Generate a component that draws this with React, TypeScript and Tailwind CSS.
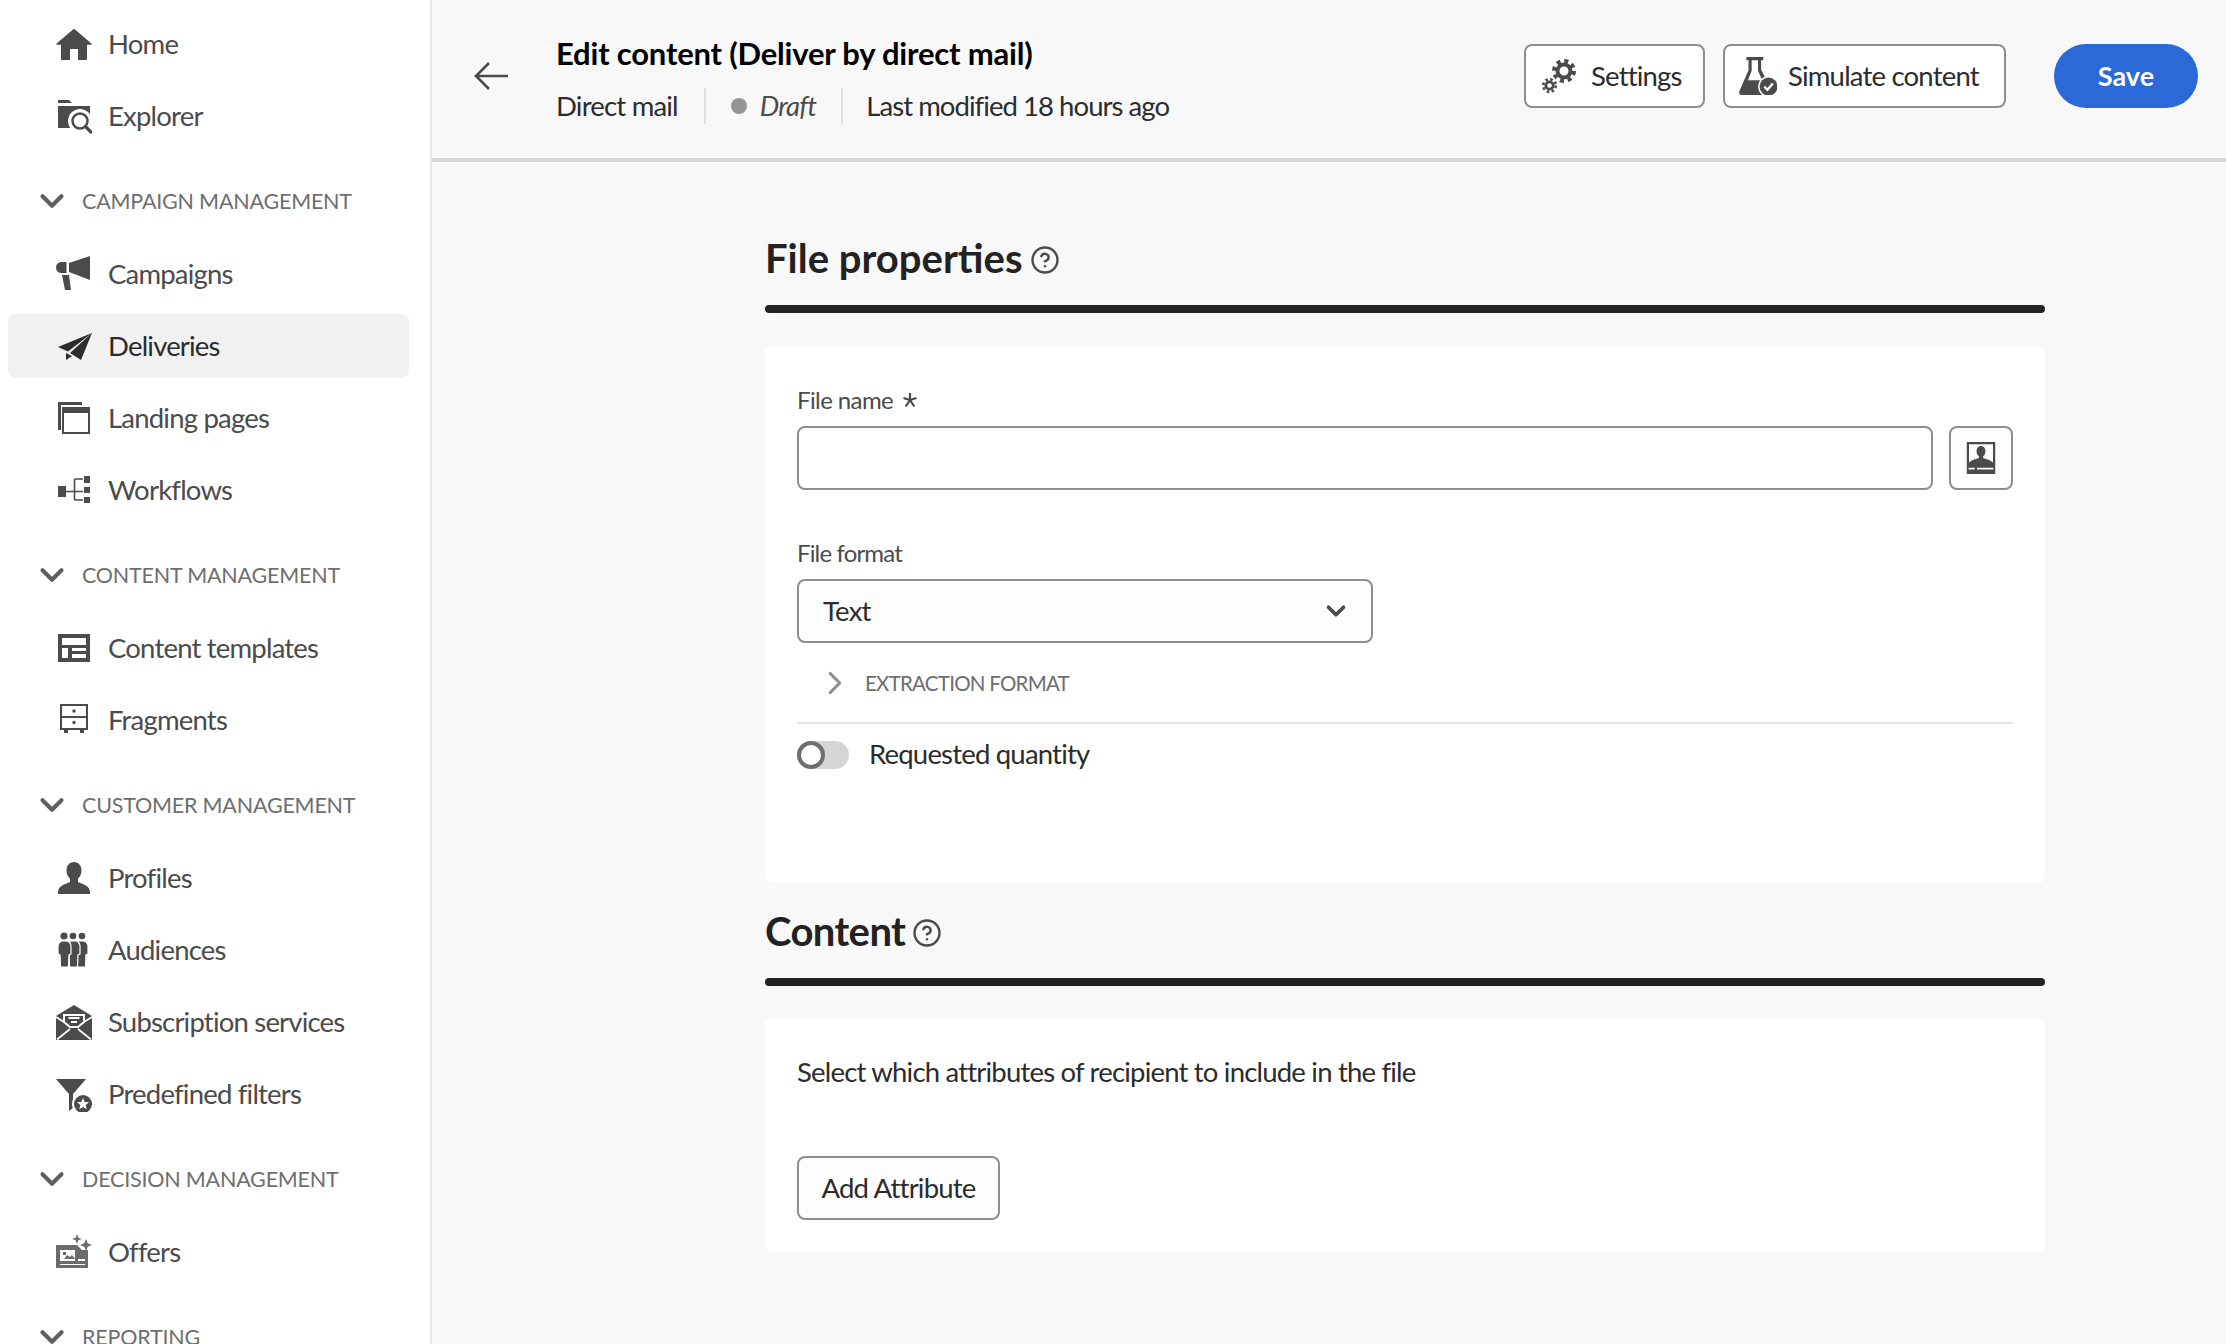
import { ChevronDown, ChevronRight, CircleHelp } from 'lucide-react'
import type { ReactNode } from 'react'

type IconProps = { className?: string }

const Svg = ({ children, className = 'w-9 h-9 shrink-0' }: { children: ReactNode; className?: string }) => (
  <svg viewBox="0 0 36 36" className={className} fill="currentColor">
    {children}
  </svg>
)

const HomeIcon = () => (
  <Svg>
    <path d="M18.7 3.3a1 1 0 0 0-1.4 0L.6 17.4a.8.8 0 0 0 .5 1.4H5V33a1 1 0 0 0 1 1h8V23h8v11h8a1 1 0 0 0 1-1V18.800h3.900a.8.8 0 0 0 .5-1.400z" />
  </Svg>
)

const ExplorerIcon = () => (
  <Svg>
    <path d="M2 2h11l3 3H2zM2 8h32v22H2z" />
    <circle cx="24" cy="23" r="12" fill="#fff" />
    <circle cx="24" cy="23" r="7.500" fill="none" stroke="currentColor" strokeWidth="2.500" />
    <path d="M29.500 28.500 35 34" stroke="currentColor" strokeWidth="3.200" strokeLinecap="round" />
  </Svg>
)

const CampaignsIcon = () => (
  <Svg>
    <path d="M13 7 34 0v24l-21-8zM10.500 6v11H5.500a5.500 5.500 0 0 1 0-11zM6 19h7l2 15H9z" />
  </Svg>
)

const DeliveriesIcon = () => (
  <Svg>
    <path d="M36 5 2 19l10 4.500zM36 5 14 25l11 7zM10 25v7l6-4z" />
  </Svg>
)

const LandingIcon = () => (
  <Svg>
    <path d="M2 2h24v3H5v25H2z" />
    <path fillRule="evenodd" d="M6 7h28v27H6zm2 6v19h24V13z" />
  </Svg>
)

const WorkflowsIcon = () => (
  <Svg>
    <path d="M2 14h8v11H2zM28 4h6v7h-6zM28 15h6v6h-6zM28 25h6v6h-6z" />
    <path d="M10 19.500h17M18.500 7v21M18.500 7H27M18.500 28H27" fill="none" stroke="currentColor" strokeWidth="1.600" />
  </Svg>
)

const TemplatesIcon = () => (
  <Svg>
    <path fillRule="evenodd" d="M2 4h32v28H2zm4 4v7h24V8zm0 10v10h6V18zm10 0v3h14v-3zm0 6v4h14v-4z" />
  </Svg>
)

const FragmentsIcon = () => (
  <Svg>
    <path d="M5 3h26v24H5zM5 15h26" fill="none" stroke="currentColor" strokeWidth="2" />
    <circle cx="18" cy="9" r="1.700" />
    <circle cx="18" cy="20.500" r="1.700" />
    <path d="M8 27h4v4H8zM24 27h4v4h-4z" />
  </Svg>
)

const ProfilesIcon = () => (
  <Svg>
    <path d="M18 2c-4.500 0-7.500 3.500-7.500 8.500 0 3.500 1.500 6.500 3.500 8v3.500c-4 2-12 3-12 10.500V34h32v-1.500C34 25 26 24 22 22v-3.500c2-1.500 3.500-4.500 3.500-8C25.500 5.500 22.500 2 18 2z" />
  </Svg>
)

const AudienceBody = ({ x }: { x: number }) => (
  <path
    transform={`translate(${x} 0)`}
    stroke="#fff"
    strokeWidth="1.200"
    d="M2 14a5 5 0 0 1 5-5h3a5 5 0 0 1 5 5v8l-2 1-.5 12h-8l-.5-12-2-1z"
  />
)

const AudiencesIcon = () => (
  <Svg>
    <circle cx="8" cy="4" r="3.600" />
    <circle cx="17" cy="4" r="3.300" />
    <circle cx="26" cy="4" r="3.300" />
    <AudienceBody x={17} />
    <AudienceBody x={9} />
    <AudienceBody x={0} />
  </Svg>
)

const SubscriptionIcon = () => (
  <Svg>
    <path d="M0 12 18 1l18 11v24H0z" />
    <path d="M8 11h20v7l-6 5h-8l-6-5z" stroke="#fff" strokeWidth="2" />
    <path d="M12.500 14h11M15 18h6" stroke="#fff" strokeWidth="1.800" />
    <path d="M0 13l8 5M36 13l-8 5M1 35.500 14 25M35 35.500 22 25" fill="none" stroke="#fff" strokeWidth="1.800" />
  </Svg>
)

const FiltersIcon = () => (
  <Svg>
    <path d="M0 3h30L17 18v14l-4 3V18z" />
    <circle cx="27" cy="28" r="11" fill="#fff" />
    <circle cx="27" cy="28" r="9" />
    <path fill="#fff" d="m27 22 1.700 4 4.300.3-3.300 2.800 1 4.200-3.700-2.300-3.700 2.300 1-4.200-3.300-2.800 4.300-.3z" />
  </Svg>
)

const OffersIcon = () => (
  <Svg className="w-9 h-9 shrink-0 text-[#6b6b6b]">
    <path fillRule="evenodd" d="M0 11h21l5 5 6 0v18H0zm4 5v11h15V16zm18 9v2h7v-2zM4 30v1h25v-1z" />
    <path d="M8 25l3-4 3 2 2-2 3 4zM7 18h3v3H7z" />
    <path d="m21 0 1.300 3.700L26 5l-3.700 1.300L21 10l-1.300-3.700L16 5l3.700-1.300zM30 5l1.700 4.300L36 11l-4.300 1.700L30 17l-1.700-4.300L24 11l4.300-1.700z" />
  </Svg>
)

const SettingsIcon = () => (
  <Svg className="w-[36px] h-[36px] shrink-0">
    <circle cx="23" cy="13" r="6.500" fill="none" stroke="currentColor" strokeWidth="4" />
    <circle cx="23" cy="13" r="10" fill="none" stroke="currentColor" strokeWidth="4" strokeDasharray="4 3.850" />
    <circle cx="8.500" cy="27.500" r="3.700" fill="none" stroke="currentColor" strokeWidth="2.800" />
    <circle cx="8.500" cy="27.500" r="6.300" fill="none" stroke="currentColor" strokeWidth="2.600" strokeDasharray="2.500 2.450" />
  </Svg>
)

const SimulateIcon = () => (
  <Svg className="w-[38px] h-[38px] shrink-0">
    <path d="M7 0h16v3h-2v9l4 8-3 2-4-9V3h-6v10L5 31h16l3 5H2.500C.5 36-.5 34 .5 32L9 12.500V3H7z" />
    <path d="M8 22h13l3 14H2z" />
    <circle cx="28" cy="28" r="10" fill="#fff" />
    <circle cx="28" cy="28" r="8.500" />
    <path d="m24 28 3 3 5-6" fill="none" stroke="#fff" strokeWidth="2.200" />
  </Svg>
)

const PersonCardIcon = () => (
  <Svg className="w-[32px] h-[32px] shrink-0">
    <path fillRule="evenodd" d="M2 0h32v36H2zm2.500 2.500v20.500h27V2.500z" />
    <path d="M18 4.500c-3 0-5 2.500-5 6 0 2.500 1 4.500 2.500 5.500v2c-3 1.500-8 1.500-11 5.500h27c-3-4-8-4-11-5.500v-2c1.500-1 2.500-3 2.500-5.500 0-3.500-2-6-5-6z" />
    <path fill="#fff" d="M4 29h7v2H4zM13.500 29H32v2H13.500z" />
  </Svg>
)

const BackArrow = () => (
  <svg viewBox="0 0 34 28" className="w-[34px] h-[28px] shrink-0 text-[#4b4b4b]" fill="none" stroke="currentColor" strokeWidth="2.600">
    <path d="M34 14H2M15 1 2 14l13 13" />
  </svg>
)

const StarMark = () => (
  <svg viewBox="0 0 14 14" className="w-[14px] h-[14px] ml-[10px]" stroke="currentColor" strokeWidth="2.200" fill="none">
    <path d="M7 0v7M.5 5 7 7M13.500 5 7 7M2.700 13.500 7 7M11.300 13.500 7 7" />
  </svg>
)

interface NavItem {
  label: string
  icon: (props: IconProps) => ReactNode
  active?: boolean
}

interface NavGroup {
  title?: string
  items: NavItem[]
}

const NAV_GROUPS: NavGroup[] = [
  {
    items: [
      { label: 'Home', icon: HomeIcon },
      { label: 'Explorer', icon: ExplorerIcon },
    ],
  },
  {
    title: 'Campaign Management',
    items: [
      { label: 'Campaigns', icon: CampaignsIcon },
      { label: 'Deliveries', icon: DeliveriesIcon, active: true },
      { label: 'Landing pages', icon: LandingIcon },
      { label: 'Workflows', icon: WorkflowsIcon },
    ],
  },
  {
    title: 'Content Management',
    items: [
      { label: 'Content templates', icon: TemplatesIcon },
      { label: 'Fragments', icon: FragmentsIcon },
    ],
  },
  {
    title: 'Customer Management',
    items: [
      { label: 'Profiles', icon: ProfilesIcon },
      { label: 'Audiences', icon: AudiencesIcon },
      { label: 'Subscription services', icon: SubscriptionIcon },
      { label: 'Predefined filters', icon: FiltersIcon },
    ],
  },
  {
    title: 'Decision Management',
    items: [{ label: 'Offers', icon: OffersIcon }],
  },
  { title: 'Reporting', items: [] },
]

function Sidebar() {
  return (
    <aside className="w-[432px] shrink-0 h-full overflow-hidden bg-white border-r-2 border-[#e8e8e8] pl-2 pr-[21px] pt-3">
      {NAV_GROUPS.map((group, i) => (
        <div key={i}>
          {group.title && (
            <div className="flex items-center h-10 mt-[33px] mb-[21px] pl-[25px] text-[#6e6e6e]">
              <ChevronDown className="w-[38px] h-[38px] shrink-0 text-[#5f5f5f]" strokeWidth={2.600} />
              <span className="ml-[11px] text-[21.5px] uppercase tracking-[-0.2px]">{group.title}</span>
            </div>
          )}
          <div className="flex flex-col gap-2">
            {group.items.map((item) => {
              const Icon = item.icon
              return (
                <div
                  key={item.label}
                  className={`flex items-center h-16 pl-12 gap-4 rounded-lg text-[27.5px] ${
                    item.active ? 'bg-[#f1f1f1] text-[#2c2c2c]' : 'text-[#4b4b4b]'
                  }`}
                >
                  <Icon />
                  <span className="tracking-[-0.8px]">{item.label}</span>
                </div>
              )
            })}
          </div>
        </div>
      ))}
    </aside>
  )
}

function Header() {
  return (
    <header className="flex items-center h-[162px] shrink-0 pl-[42px] pr-[28px] pb-[6px] border-b-4 border-[#d5d5d5]">
      <BackArrow />
      <div className="ml-[48px] mt-[5px]">
        <h1 className="text-[31px] leading-[40px] font-bold text-black tracking-[-0.2px]">
          Edit content (Deliver by direct mail)
        </h1>
        <div className="flex items-center h-9 mt-[15px] text-[27.5px] text-[#2c2c2c] tracking-[-0.8px]">
          <span>Direct mail</span>
          <div className="w-0.5 h-9 bg-[#e1e1e1] ml-[26px] mr-[25px]" />
          <div className="w-4 h-4 rounded-full bg-[#959595]" />
          <span className="italic text-[#4b4b4b] ml-[13px]">Draft</span>
          <div className="w-0.5 h-9 bg-[#e1e1e1] ml-[25px] mr-[23px]" />
          <span className="tracking-[-0.95px]">Last modified 18 hours ago</span>
        </div>
      </div>
      <div className="flex items-center gap-[18px] ml-auto">
        <button className="flex items-center h-16 w-[181px] pl-[15px] gap-[14px] bg-white border-2 border-[#8e8e8e] rounded-lg text-[27.5px] text-[#2c2c2c]">
          <span className="text-[#4b4b4b]">
            <SettingsIcon />
          </span>
          <span className="tracking-[-0.8px]">Settings</span>
        </button>
        <button className="flex items-center h-16 w-[283px] pl-[14px] gap-[11px] bg-white border-2 border-[#8e8e8e] rounded-lg text-[27.5px] text-[#2c2c2c]">
          <span className="text-[#4b4b4b]">
            <SimulateIcon />
          </span>
          <span className="tracking-[-0.8px]">Simulate content</span>
        </button>
      </div>
      <button className="h-16 w-[144px] ml-[48px] rounded-full bg-[#2b68d8] text-white text-[27px] font-bold">Save</button>
    </header>
  )
}

function SectionTitle({ title, className = '' }: { title: string; className?: string }) {
  return (
    <div>
      <div className="flex items-center h-12 gap-[7px]">
        <h2 className={`text-[40px] leading-[44px] pb-1 font-bold text-[#222222] ${className}`}>{title}</h2>
        <CircleHelp className="w-[30px] h-[30px] text-[#4b4b4b]" strokeWidth={1.900} />
      </div>
      <div className="h-2 mt-[21px] rounded-full bg-[#222222]" />
    </div>
  )
}

function FileProperties() {
  return (
    <div className="h-[537px] mt-[33px] px-8 pt-10 bg-white rounded-lg">
      <div className="flex items-center h-[30px] pb-0.5 text-[24px] text-[#4b4b4b]">
        <span className="tracking-[-0.6px]">File name</span>
        <StarMark />
      </div>
      <div className="flex gap-4 mt-[10px]">
        <input className="flex-1 h-16 bg-white border-2 border-[#8e8e8e] rounded-lg" />
        <button className="flex items-center justify-center w-16 h-16 bg-[#fdfdfd] border-2 border-[#8e8e8e] rounded-lg text-[#4b4b4b]">
          <PersonCardIcon />
        </button>
      </div>
      <div className="h-[30px] leading-[28px] mt-[49px] text-[24px] text-[#4b4b4b] tracking-[-0.85px]">File format</div>
      <div className="flex items-center justify-between w-[576px] h-16 mt-[10px] pl-6 pr-5 bg-[#fdfdfd] border-2 border-[#8e8e8e] rounded-lg text-[27.5px] text-[#2c2c2c]">
        <span className="tracking-[-0.8px]">Text</span>
        <ChevronDown className="w-[30px] h-[30px] text-[#4b4b4b]" strokeWidth={3} />
      </div>
      <div className="flex items-center h-[30px] mt-[25px] pl-[19px] text-[#6e6e6e]">
        <ChevronRight className="w-[38px] h-[38px] shrink-0 text-[#8e8e8e]" strokeWidth={2} />
        <span className="ml-[11px] text-[20.5px] tracking-[-0.75px]">EXTRACTION FORMAT</span>
      </div>
      <div className="h-0.5 mt-[24px] bg-[#e1e1e1]" />
      <div className="flex items-center h-7 mt-[17px]">
        <div className="w-[52px] h-7 rounded-full bg-[#d5d5d5]">
          <div className="w-7 h-7 rounded-full bg-white border-4 border-[#6e6e6e]" />
        </div>
        <span className="ml-5 pb-0.5 text-[27.5px] text-[#2c2c2c] tracking-[-0.8px]">Requested quantity</span>
      </div>
    </div>
  )
}

function ContentCard() {
  return (
    <div className="h-[234px] mt-8 px-8 pt-10 bg-white rounded-lg">
      <p className="text-[27.5px] leading-[28px] text-[#2c2c2c] tracking-[-0.8px]">
        Select which attributes of recipient to include in the file
      </p>
      <button className="h-16 w-[203px] mt-[70px] bg-[#fdfdfd] border-2 border-[#8e8e8e] rounded-lg text-[27.5px] text-[#2c2c2c] tracking-[-0.8px]">
        Add Attribute
      </button>
    </div>
  )
}

export default function App() {
  return (
    <div className="flex w-full h-screen overflow-hidden bg-[#f8f8f8] font-['Lato','Liberation_Sans',sans-serif]">
      <Sidebar />
      <main className="flex-1 flex flex-col min-w-0">
        <Header />
        <div className="w-[1280px] ml-[333px] pt-[74px]">
          <SectionTitle title="File properties" />
          <FileProperties />
          <div className="mt-[26px]">
            <SectionTitle title="Content" className="tracking-[-0.6px]" />
          </div>
          <ContentCard />
        </div>
      </main>
    </div>
  )
}
